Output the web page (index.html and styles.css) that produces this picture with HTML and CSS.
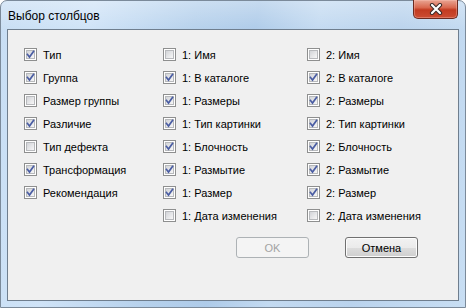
FILE: index.html
```html
<!DOCTYPE html>
<html lang="ru">
<head>
    <meta charset="UTF-8">
    <title>Выбор столбцов</title>
    <link rel="stylesheet" href="styles.css">
</head>
<body>
    <svg width="0" height="0" class="defs">
        <symbol id="tick" viewBox="0 0 13 13">
            <path d="M3.5 6.5 L5.5 9 L9.5 3.5" fill="none" stroke="#4a5da3" stroke-width="1.7" stroke-linecap="square"/>
        </symbol>
    </svg>

    <div class="window">
        <!-- Заголовок окна -->
        <div class="titlebar">
            <span class="title">Выбор столбцов</span>
            <div class="close">
                <svg width="16" height="12" viewBox="0 0 16 12">
                    <path d="M4 2 L12 10 M12 2 L4 10" stroke="#3b2a28" stroke-width="4.2" stroke-linecap="round"/>
                    <path d="M4 2 L12 10 M12 2 L4 10" stroke="#fff" stroke-width="2.2" stroke-linecap="round"/>
                </svg>
            </div>
        </div>

        <!-- Клиентская область -->
        <div class="client">
            <div class="columns">
                <div class="col">
                    <label class="item"><span class="cb on"><svg><use href="#tick"/></svg></span>Тип</label>
                    <label class="item"><span class="cb on"><svg><use href="#tick"/></svg></span>Группа</label>
                    <label class="item"><span class="cb"></span>Размер группы</label>
                    <label class="item"><span class="cb on"><svg><use href="#tick"/></svg></span>Различие</label>
                    <label class="item"><span class="cb"></span>Тип дефекта</label>
                    <label class="item"><span class="cb on"><svg><use href="#tick"/></svg></span>Трансформация</label>
                    <label class="item"><span class="cb on"><svg><use href="#tick"/></svg></span>Рекомендация</label>
                </div>
                <div class="col">
                    <label class="item"><span class="cb"></span>1: Имя</label>
                    <label class="item"><span class="cb on"><svg><use href="#tick"/></svg></span>1: В каталоге</label>
                    <label class="item"><span class="cb on"><svg><use href="#tick"/></svg></span>1: Размеры</label>
                    <label class="item"><span class="cb on"><svg><use href="#tick"/></svg></span>1: Тип картинки</label>
                    <label class="item"><span class="cb on"><svg><use href="#tick"/></svg></span>1: Блочность</label>
                    <label class="item"><span class="cb on"><svg><use href="#tick"/></svg></span>1: Размытие</label>
                    <label class="item"><span class="cb on"><svg><use href="#tick"/></svg></span>1: Размер</label>
                    <label class="item"><span class="cb"></span>1: Дата изменения</label>
                </div>
                <div class="col">
                    <label class="item"><span class="cb"></span>2: Имя</label>
                    <label class="item"><span class="cb on"><svg><use href="#tick"/></svg></span>2: В каталоге</label>
                    <label class="item"><span class="cb on"><svg><use href="#tick"/></svg></span>2: Размеры</label>
                    <label class="item"><span class="cb on"><svg><use href="#tick"/></svg></span>2: Тип картинки</label>
                    <label class="item"><span class="cb on"><svg><use href="#tick"/></svg></span>2: Блочность</label>
                    <label class="item"><span class="cb on"><svg><use href="#tick"/></svg></span>2: Размытие</label>
                    <label class="item"><span class="cb on"><svg><use href="#tick"/></svg></span>2: Размер</label>
                    <label class="item"><span class="cb"></span>2: Дата изменения</label>
                </div>
            </div>

            <div class="buttons">
                <button class="btn disabled">OK</button>
                <button class="btn default">Отмена</button>
            </div>
        </div>
    </div>
</body>
</html>
```

FILE: styles.css
```css
/* Общие стили */
html, body {
    margin: 0;
    padding: 0;
    background: #fff;
}

body {
    width: 466px;
    height: 308px;
    overflow: hidden;
    font-family: "Liberation Sans", Arial, sans-serif;
}

.defs {
    position: absolute;
}

/* Окно со стеклянной рамкой */
.window {
    box-sizing: border-box;
    width: 466px;
    height: 308px;
    border: 1px solid #7b8a9a;
    border-radius: 7px 7px 0 0;
    background:
        linear-gradient(to bottom, rgba(255, 255, 255, 0.3), rgba(255, 255, 255, 0) 30px),
        linear-gradient(100deg, #c8def4 0%, #cfe3f7 18%, #b6d1ec 38%, #aecbe9 50%, #c3daf1 62%, #bad3ed 78%, #c8def3 100%);
    display: flex;
    flex-direction: column;
}

.titlebar {
    height: 28px;
    display: flex;
    align-items: flex-start;
    justify-content: space-between;
    padding: 0 7px 0 7px;
}

.title {
    font-size: 12px;
    color: #000;
    margin-top: 8px;
}

.close {
    width: 43px;
    height: 18px;
    margin-top: -1px;
    border: 1px solid #6b2a20;
    border-top: none;
    border-radius: 0 0 5px 5px;
    background: linear-gradient(to bottom, #e9a593 0%, #d9684f 42%, #c23a20 55%, #cc4d33 100%);
    box-shadow: inset 0 0 0 1px rgba(255, 200, 190, 0.35);
    display: flex;
    align-items: center;
    justify-content: center;
}

/* Клиентская область */
.client {
    flex: 1;
    margin: 0 6px 6px 6px;
    border: 1px solid #6f7e8e;
    background: #f0f0f0;
    padding: 13px 0 0 16px;
}

.columns {
    display: grid;
    grid-template-columns: 139px 144px 1fr;
}

.item {
    height: 23px;
    display: flex;
    align-items: center;
    gap: 6px;
    font-size: 11px;
    color: #000;
}

/* Флажки */
.cb {
    box-sizing: border-box;
    width: 13px;
    height: 13px;
    border: 1px solid #8e8f8f;
    background: #fff;
    position: relative;
    flex: none;
}

.cb::before {
    content: '';
    position: absolute;
    left: 1px;
    top: 1px;
    width: 9px;
    height: 9px;
    box-sizing: border-box;
    border: 1px solid #b7b9bc;
    background: linear-gradient(135deg, #d2d4d8, #f7f7f7);
}

.cb svg {
    position: absolute;
    left: -1px;
    top: -1px;
    width: 13px;
    height: 13px;
}

/* Кнопки */
.buttons {
    display: flex;
    justify-content: flex-end;
    gap: 36px;
    margin-top: 10px;
    padding-right: 40px;
}

.btn {
    width: 73px;
    height: 21px;
    font-family: "Liberation Sans", Arial, sans-serif;
    font-size: 11px;
    border-radius: 3px;
    padding: 0;
}

.btn.disabled {
    border: 1px solid #adb2b5;
    background: #f4f4f4;
    color: #a3a3a3;
}

.btn.default {
    border: 1px solid #707070;
    background: linear-gradient(to bottom, #f2f2f2 0%, #ebebeb 50%, #dddddd 51%, #cfcfcf 100%);
    box-shadow: inset 0 0 0 1px #fcfcfc;
    color: #000;
}
```
